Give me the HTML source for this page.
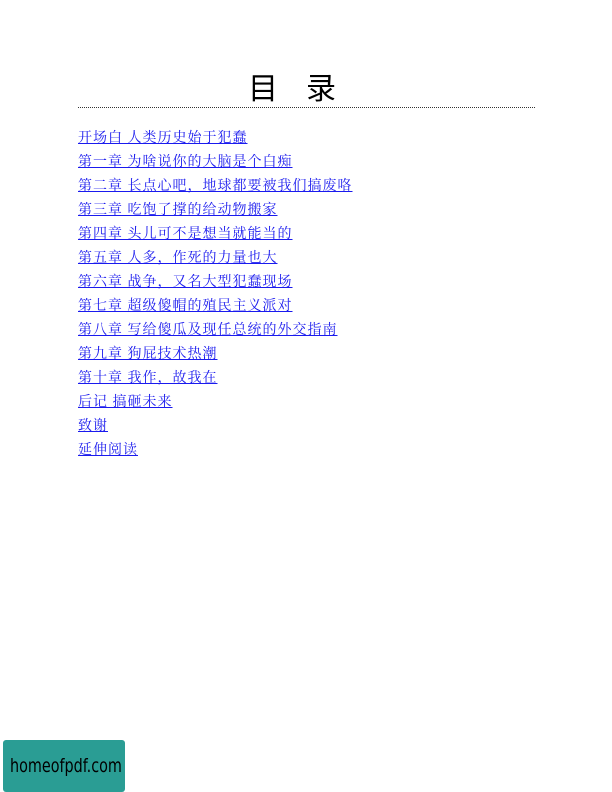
<!DOCTYPE html>
<html><head><meta charset="utf-8"><style>
body{margin:0;width:612px;height:792px;background:#fff;position:relative;overflow:hidden;font-family:"Liberation Serif","Noto Serif CJK SC",serif}
.t{position:absolute;left:248px;top:72px;font-size:30px;line-height:36px;color:#000;letter-spacing:28px;font-family:"Liberation Sans","Noto Sans CJK SC",sans-serif}
.hr{position:absolute;left:78px;top:107px;width:457px;border-top:1.5px dotted #333}
.l{position:absolute;left:78px;font-size:14px;line-height:16px;color:#1a1aee;text-decoration:underline;white-space:nowrap;letter-spacing:1px}
.b{position:absolute;left:3px;top:740px;width:122px;height:52px;background:#2a9d94;border-radius:3px;overflow:hidden}
.b span{position:absolute;left:7px;top:14px;color:#000;font:19px "DejaVu Sans Condensed","Liberation Sans Narrow",sans-serif;line-height:24px;white-space:nowrap;transform:scaleX(0.84);transform-origin:left}
</style></head><body>
<div class="t">目录</div>
<div class="hr"></div>
<div class="l" style="top:131px">开场白&nbsp;人类历史始于犯蠢</div>
<div class="l" style="top:155px">第一章&nbsp;为啥说你的大脑是个白痴</div>
<div class="l" style="top:179px">第二章&nbsp;长点心吧，地球都要被我们搞废咯</div>
<div class="l" style="top:203px">第三章&nbsp;吃饱了撑的给动物搬家</div>
<div class="l" style="top:227px">第四章&nbsp;头儿可不是想当就能当的</div>
<div class="l" style="top:251px">第五章&nbsp;人多，作死的力量也大</div>
<div class="l" style="top:275px">第六章&nbsp;战争，又名大型犯蠢现场</div>
<div class="l" style="top:299px">第七章&nbsp;超级傻帽的殖民主义派对</div>
<div class="l" style="top:323px">第八章&nbsp;写给傻瓜及现任总统的外交指南</div>
<div class="l" style="top:347px">第九章&nbsp;狗屁技术热潮</div>
<div class="l" style="top:371px">第十章&nbsp;我作，故我在</div>
<div class="l" style="top:395px">后记&nbsp;搞砸未来</div>
<div class="l" style="top:419px">致谢</div>
<div class="l" style="top:443px">延伸阅读</div>
<div class="b"><span>homeofpdf.com</span></div>
</body></html>
